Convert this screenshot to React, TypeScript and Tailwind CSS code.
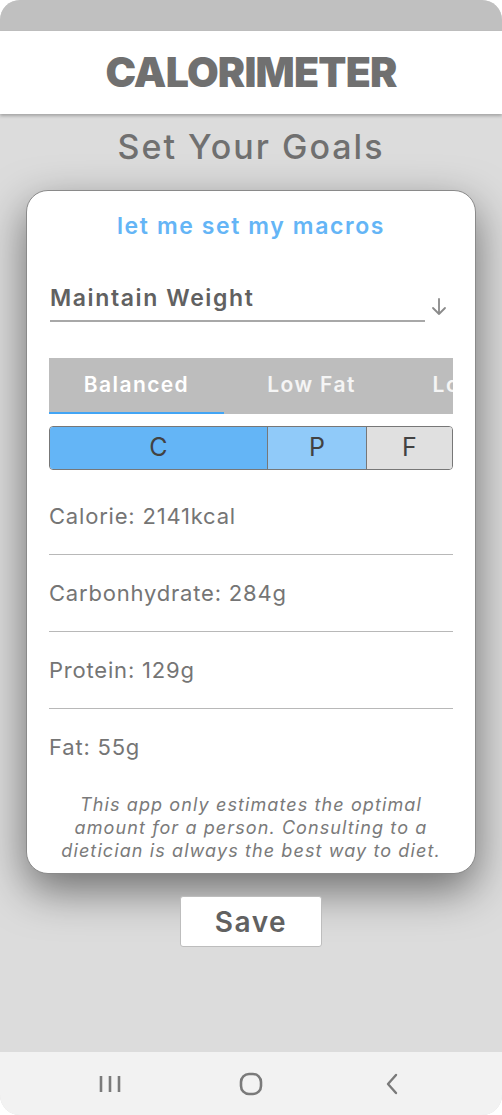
import React from 'react';

const rows = ['Calorie: 2141kcal', 'Carbonhydrate: 284g', 'Protein: 129g', 'Fat: 55g'];
const tabs = ['Balanced', 'Low Fat', 'Low Carb'];

export default function App() {
  return (
    <div className="w-[502px] h-[1115px] bg-white font-['Inter',sans-serif]">
      <div className="w-full h-full rounded-[20px] overflow-hidden flex flex-col bg-[#dcdcdc]">
        {/* status bar */}
        <div className="h-[31px] bg-[#c0c0c0] shrink-0"></div>

        {/* header */}
        <div className="h-[83px] bg-white shrink-0 flex items-center justify-center shadow-[0_2px_3px_rgba(0,0,0,0.25)] relative z-10">
          <h1 className="text-[41px] font-black tracking-[-0.8px] text-[#707070] leading-none">CALORIMETER</h1>
        </div>

        {/* main */}
        <div className="flex-1 flex flex-col items-center pt-[13px]">
          <h2 className="text-[34px] leading-[40px] font-medium tracking-[2px] text-[#707070]">Set Your Goals</h2>

          <div className="mt-[23px] w-[450px] bg-white border border-[#8a8a8a] rounded-[22px] shadow-[0_16px_44px_rgba(0,0,0,0.5)] px-[22px] pt-[20px] pb-[11px] flex flex-col">
            <div className="text-center text-[23px] leading-[30px] font-semibold tracking-[1.6px] text-[#64b5f6]">let me set my macros</div>

            <div className="mt-[42px] flex items-end pl-[1px]">
              <div className="w-[375px] border-b-2 border-[#a8a8a8] pb-[7px]">
                <div className="text-[23px] leading-[30px] font-semibold tracking-[1.6px] text-[#616161]">Maintain Weight</div>
              </div>
              <svg width="18" height="20" viewBox="0 0 18 20" className="ml-[5px] mb-[5px]" fill="none" stroke="#8a8a8a" strokeWidth="1.8" strokeLinecap="round" strokeLinejoin="round">
                <path d="M9 2v15M3 11l6 6 6-6" />
              </svg>
            </div>

            <div className="mt-[36px] h-[56px] bg-[#bdbdbd] flex overflow-hidden">
              {tabs.map((t, i) => (
                <div
                  key={t}
                  className={`w-[175px] shrink-0 flex items-center justify-center text-[21px] font-semibold tracking-[1.4px] border-b-2 ${i === 0 ? 'border-[#42a5f5] text-white' : 'border-transparent text-white/85'}`}
                >
                  {t}
                </div>
              ))}
            </div>

            <div className="mt-[12px] h-[44px] flex border border-[#777] rounded-[4px] overflow-hidden text-[25px] text-[#424242]">
              <div className="w-[218px] bg-[#64b5f6] flex items-center justify-center border-r border-[#777]">C</div>
              <div className="w-[99px] bg-[#90caf9] flex items-center justify-center border-r border-[#777]">P</div>
              <div className="flex-1 bg-[#e0e0e0] flex items-center justify-center">F</div>
            </div>

            <div className="mt-[8px] flex flex-col">
              {rows.map((r, i) => (
                <div
                  key={r}
                  className={`h-[77px] flex items-center text-[22px] tracking-[0.8px] text-[#757575] ${i < rows.length - 1 ? 'border-b border-[#b8b8b8]' : ''}`}
                >
                  {r}
                </div>
              ))}
            </div>

            <p className="mt-[7px] px-[6px] text-center italic text-[18px] leading-[23px] tracking-[1.1px] text-[#7a7a7a]">
              This app only estimates the optimal amount for a person. Consulting to a dietician is always the best way to diet.
            </p>
          </div>

          <button className="mt-[22px] w-[142px] h-[51px] bg-white border border-[#bdbdbd] rounded-[3px] text-[28px] font-semibold tracking-[1.5px] text-[#616161]">
            Save
          </button>
        </div>

        {/* nav bar */}
        <div className="h-[63px] bg-[#f2f2f2] shrink-0 flex items-center justify-center gap-[101px]">
          <div className="w-[40px] flex justify-center">
            <svg width="24" height="18" viewBox="0 0 24 18" fill="none" stroke="#7a7a7a" strokeWidth="2.6">
              <path d="M3 1v16M12 1v16M21 1v16" />
            </svg>
          </div>
          <div className="w-[40px] flex justify-center">
            <svg width="24" height="24" viewBox="0 0 24 24" fill="none" stroke="#7a7a7a" strokeWidth="2.6">
              <rect x="2" y="2" width="20" height="20" rx="8" />
            </svg>
          </div>
          <div className="w-[40px] flex justify-center">
            <svg width="16" height="24" viewBox="0 0 16 24" fill="none" stroke="#7a7a7a" strokeWidth="2.4" strokeLinecap="round" strokeLinejoin="round">
              <path d="M12 3L4 12l8 9" />
            </svg>
          </div>
        </div>
      </div>
    </div>
  );
}
